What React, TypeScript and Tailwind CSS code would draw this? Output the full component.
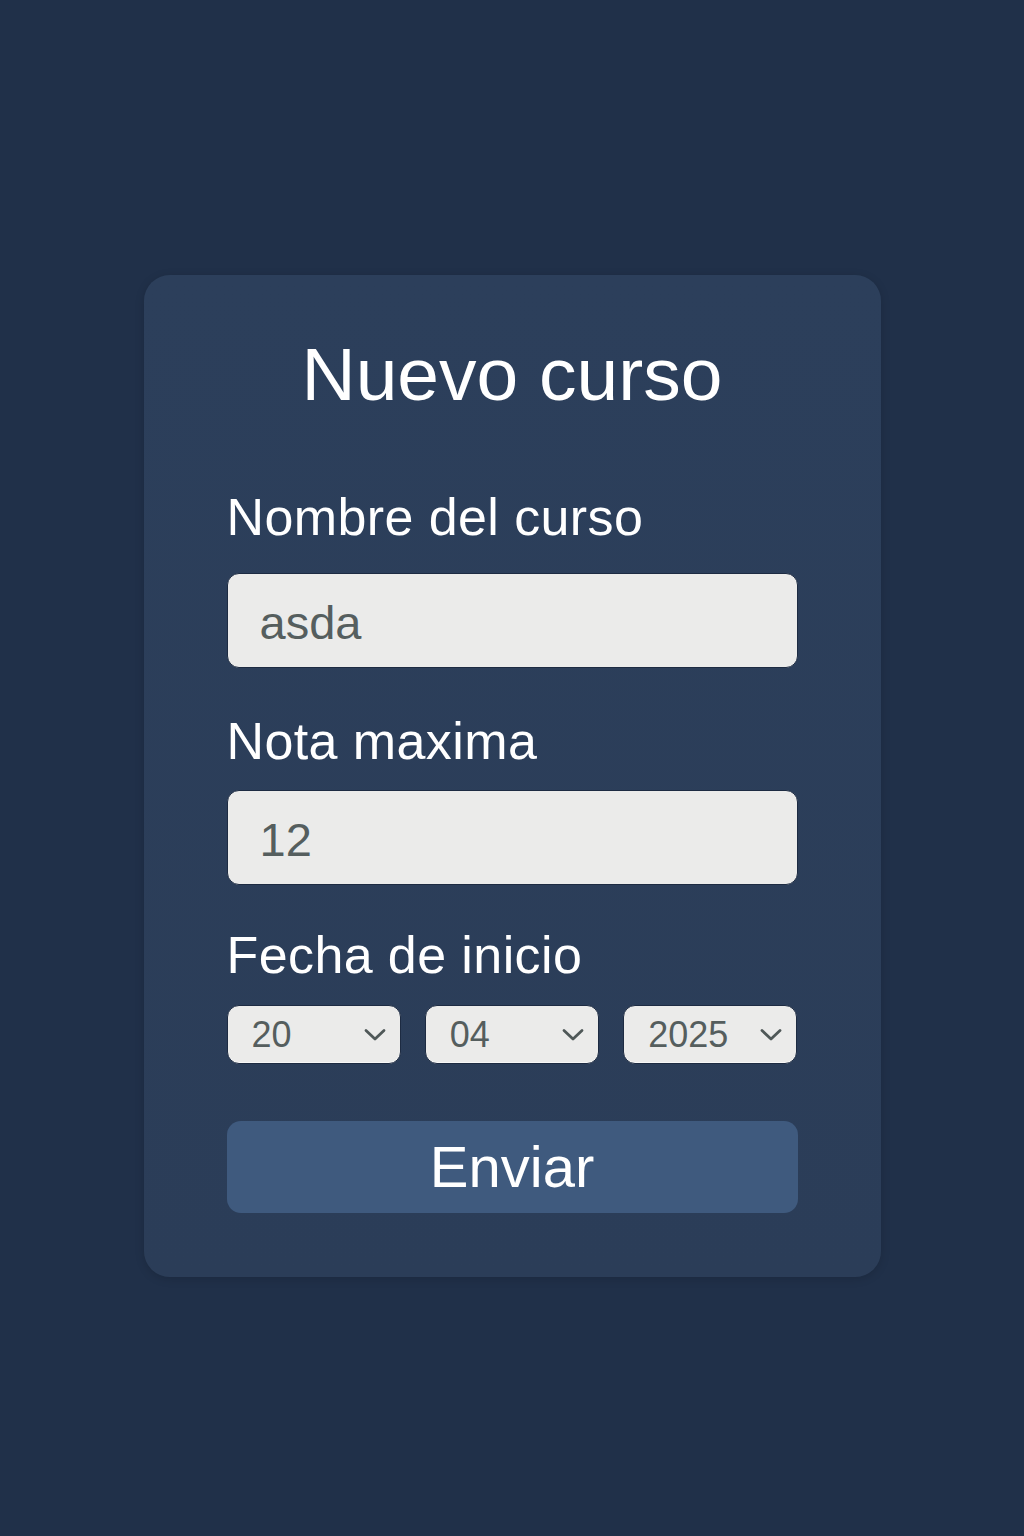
import React from "react";

const font = { fontFamily: '"Liberation Sans", Arial, sans-serif' };

function Chevron() {
  return (
    <svg width="22" height="14" viewBox="0 0 22 14" fill="none">
      <path d="M2 2.5 L11 11 L20 2.5" stroke="#4f5858" strokeWidth="2.8" strokeLinecap="round" strokeLinejoin="round" />
    </svg>
  );
}

function FakeSelect({ value }: { value: string }) {
  return (
    <div className="flex h-[59px] w-full items-center justify-between rounded-[12px] border border-[#1d2b42] bg-[#ebebea] pl-[24px] pr-[14px] shadow-[inset_0_-1px_0_rgba(255,255,255,0.6)]">
      <span className="text-[36px] leading-none text-[#555e5e]">{value}</span>
      <Chevron />
    </div>
  );
}

export default function App() {
  return (
    <div className="min-h-[1536px] w-full bg-[#203049] pt-[275px]" style={font}>
      <div className="mx-auto flex w-[737px] flex-col rounded-[26px] bg-gradient-to-b from-[#2c3f5b] to-[#2b3d58] px-[83px] pb-[64px] pt-[62px] shadow-[0_2px_10px_rgba(0,0,0,0.15)]">
        <h1 className="text-center text-[75px] leading-none text-white">Nuevo curso</h1>

        <label className="mt-[79px] text-[52px] leading-none tracking-[0.4px] text-white">Nombre del curso</label>
        <input
          readOnly
          value="asda"
          className="mt-[30px] h-[95px] w-full rounded-[12px] border border-[#1d2b42] bg-[#ebebea] px-[32px] pt-[4px] text-[47px] text-[#555e5e] outline-none"
          style={font}
        />

        <label className="mt-[47px] text-[52px] leading-none tracking-[0.4px] text-white">Nota maxima</label>
        <input
          readOnly
          value="12"
          className="mt-[23px] h-[95px] w-full rounded-[12px] border border-[#1d2b42] bg-[#ebebea] px-[32px] pt-[4px] text-[47px] text-[#555e5e] outline-none"
          style={font}
        />

        <label className="mt-[44px] text-[52px] leading-none tracking-[0.4px] text-white">Fecha de inicio</label>
        <div className="mt-[24px] grid grid-cols-3 gap-[24px]">
          <FakeSelect value="20" />
          <FakeSelect value="04" />
          <FakeSelect value="2025" />
        </div>

        <button
          className="mt-[57px] flex h-[92px] w-full items-center justify-center rounded-[14px] bg-[#3f5a7e] text-[58px] leading-none text-white"
          style={font}
        >
          Enviar
        </button>
      </div>
    </div>
  );
}
